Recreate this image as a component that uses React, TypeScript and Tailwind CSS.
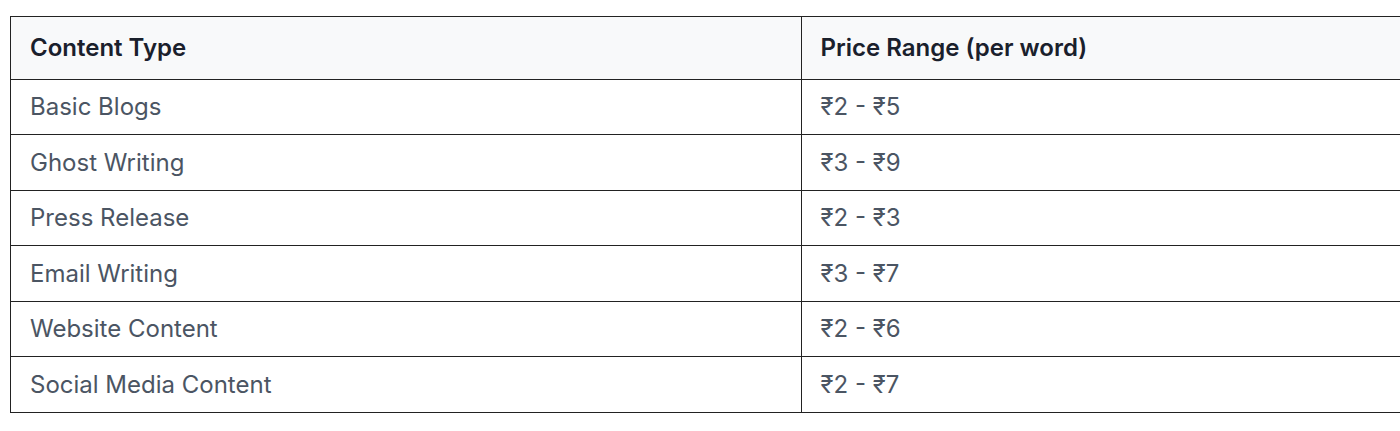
const rows = [
  { type: "Basic Blogs", price: "₹2 - ₹5" },
  { type: "Ghost Writing", price: "₹3 - ₹9" },
  { type: "Press Release", price: "₹2 - ₹3" },
  { type: "Email Writing", price: "₹3 - ₹7" },
  { type: "Website Content", price: "₹2 - ₹6" },
  { type: "Social Media Content", price: "₹2 - ₹7" },
];

export default function App() {
  return (
    <div className="w-full h-[431px] overflow-hidden bg-white pt-[16px] pl-[10px] font-['Inter','Noto_Sans',sans-serif]">
      <table className="w-[1582px] table-fixed border-collapse border border-[#222]">
        <thead>
          <tr className="h-[63px] bg-[#f8f9fa]">
            <th className="w-1/2 border border-[#222] px-[19px] text-left text-[24px] font-semibold text-[#1a202c]">
              Content Type
            </th>
            <th className="w-1/2 border border-[#222] px-[19px] text-left text-[24px] font-semibold text-[#1a202c]">
              Price Range (per word)
            </th>
          </tr>
        </thead>
        <tbody>
          {rows.map((r, i) => (
            <tr key={r.type} className={i % 2 === 0 ? "h-[55px]" : "h-[56px]"}>
              <td className="border border-[#222] px-[19px] text-[24px] text-[#4b5563]">{r.type}</td>
              <td className="border border-[#222] px-[19px] text-[24px] text-[#4b5563]">{r.price}</td>
            </tr>
          ))}
        </tbody>
      </table>
    </div>
  );
}
